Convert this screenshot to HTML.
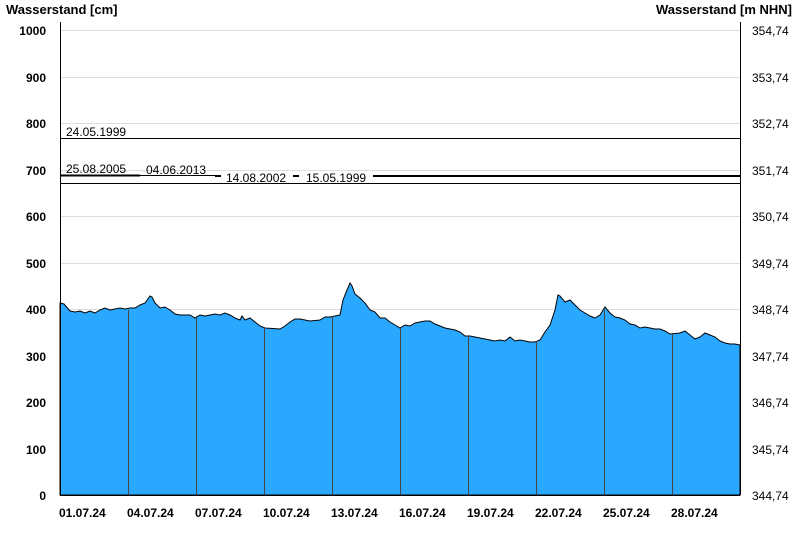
<!DOCTYPE html>
<html><head><meta charset="utf-8"><style>
html,body{margin:0;padding:0;background:#fff;width:800px;height:550px;overflow:hidden}
svg{display:block;font-family:"Liberation Sans",Arial,sans-serif}
</style></head><body>
<svg width="800" height="550" viewBox="0 0 800 550">
<text x="6" y="14" font-size="13" font-weight="bold">Wasserstand [cm]</text>
<text x="792" y="14" font-size="13" font-weight="bold" text-anchor="end">Wasserstand [m NHN]</text>
<g stroke="#dddddd" stroke-width="1">
<line x1="60" y1="30.5" x2="740" y2="30.5"/><line x1="60" y1="77.5" x2="740" y2="77.5"/>
<line x1="60" y1="123.5" x2="740" y2="123.5"/><line x1="60" y1="170.5" x2="740" y2="170.5"/>
<line x1="60" y1="216.5" x2="740" y2="216.5"/><line x1="60" y1="263.5" x2="740" y2="263.5"/>
<line x1="60" y1="309.5" x2="740" y2="309.5"/><line x1="60" y1="356.5" x2="740" y2="356.5"/>
<line x1="60" y1="402.5" x2="740" y2="402.5"/><line x1="60" y1="449.5" x2="740" y2="449.5"/>
</g>
<polygon fill="#2aa8ff" stroke="#000" stroke-width="1" points="60,495 60,303 64,304 70,311 75,312 80,311 85,313 90,311 95,313 100,310 105,308 110,310 115,309 120,308 125,309 130,308 135,308 140,305 145,303 150,296 152,297 155,303 160,308 165,307 170,310 175,314 180,315 190,315 195,318 200,315 205,316 210,315 215,314 220,315 225,313 230,315 235,318 240,320 242,316 245,320 250,318 255,322 260,326 265,328 280,329 285,326 290,322 295,319 300,319 310,321 320,320 325,317 330,317 335,316 340,315 343,300 347,290 350,283 352,286 355,294 360,298 365,303 370,310 375,312 380,318 385,318 390,322 395,325 400,328 405,325 410,326 415,323 420,322 425,321 430,321 435,324 440,326 445,328 450,329 455,330 460,332 465,336 470,336 475,337 480,338 485,339 490,340 495,341 500,340 505,341 510,337 515,341 520,340 525,341 530,342 535,342 540,340 545,332 550,325 555,310 558,295 560,296 565,302 570,300 575,305 580,310 585,313 590,316 595,318 600,315 605,307 610,313 615,317 620,318 625,320 630,324 635,325 640,328 645,327 650,328 655,329 660,329 665,331 670,334 680,333 685,331 690,335 695,339 700,337 705,333 710,335 715,337 720,341 725,343 730,344 735,344 740,345 740,495"/>
<g stroke="#444" stroke-width="1">
<line x1="128.5" y1="310" x2="128.5" y2="495"/><line x1="196.5" y1="316" x2="196.5" y2="495"/>
<line x1="264.5" y1="328" x2="264.5" y2="495"/><line x1="332.5" y1="316" x2="332.5" y2="495"/>
<line x1="400.5" y1="328" x2="400.5" y2="495"/><line x1="468.5" y1="336" x2="468.5" y2="495"/>
<line x1="536.5" y1="341" x2="536.5" y2="495"/><line x1="604.5" y1="310" x2="604.5" y2="495"/>
<line x1="672.5" y1="334" x2="672.5" y2="495"/>
</g>
<g stroke="#000">
<line x1="60" y1="138.5" x2="740" y2="138.5" stroke-width="1"/>
<line x1="60" y1="183.5" x2="740" y2="183.5" stroke-width="1"/>
<line x1="60" y1="175.5" x2="140" y2="175.5" stroke-width="2"/>
<line x1="140" y1="175.5" x2="215" y2="175.5" stroke-width="1"/>
<line x1="215" y1="176" x2="221" y2="176" stroke-width="2"/>
<line x1="293" y1="176" x2="299" y2="176" stroke-width="2"/>
<line x1="373" y1="176" x2="740" y2="176" stroke-width="2"/>
</g>
<g font-size="12" fill="#000">
<text x="66" y="136">24.05.1999</text>
<text x="66" y="173">25.08.2005</text>
<text x="146" y="174">04.06.2013</text>
<text x="226" y="182">14.08.2002</text>
<text x="306" y="182">15.05.1999</text>
</g>
<g stroke="#000" stroke-width="1">
<line x1="60.5" y1="22" x2="60.5" y2="495"/>
<line x1="740.5" y1="22" x2="740.5" y2="495"/>
<line x1="60" y1="495.5" x2="740" y2="495.5"/>
</g>
<g font-size="12" font-weight="bold" text-anchor="end">
<text x="46" y="35">1000</text><text x="46" y="82">900</text><text x="46" y="128">800</text>
<text x="46" y="175">700</text><text x="46" y="221">600</text><text x="46" y="268">500</text>
<text x="46" y="314">400</text><text x="46" y="361">300</text><text x="46" y="407">200</text>
<text x="46" y="454">100</text><text x="46" y="500">0</text>
</g>
<g font-size="12">
<text x="752" y="35">354,74</text><text x="752" y="82">353,74</text><text x="752" y="128">352,74</text>
<text x="752" y="175">351,74</text><text x="752" y="221">350,74</text><text x="752" y="268">349,74</text>
<text x="752" y="314">348,74</text><text x="752" y="361">347,74</text><text x="752" y="407">346,74</text>
<text x="752" y="454">345,74</text><text x="752" y="500">344,74</text>
</g>
<g font-size="12" font-weight="bold">
<text x="59" y="517">01.07.24</text><text x="127" y="517">04.07.24</text><text x="195" y="517">07.07.24</text>
<text x="263" y="517">10.07.24</text><text x="331" y="517">13.07.24</text><text x="399" y="517">16.07.24</text>
<text x="467" y="517">19.07.24</text><text x="535" y="517">22.07.24</text><text x="603" y="517">25.07.24</text>
<text x="671" y="517">28.07.24</text>
</g>
</svg>
</body></html>
